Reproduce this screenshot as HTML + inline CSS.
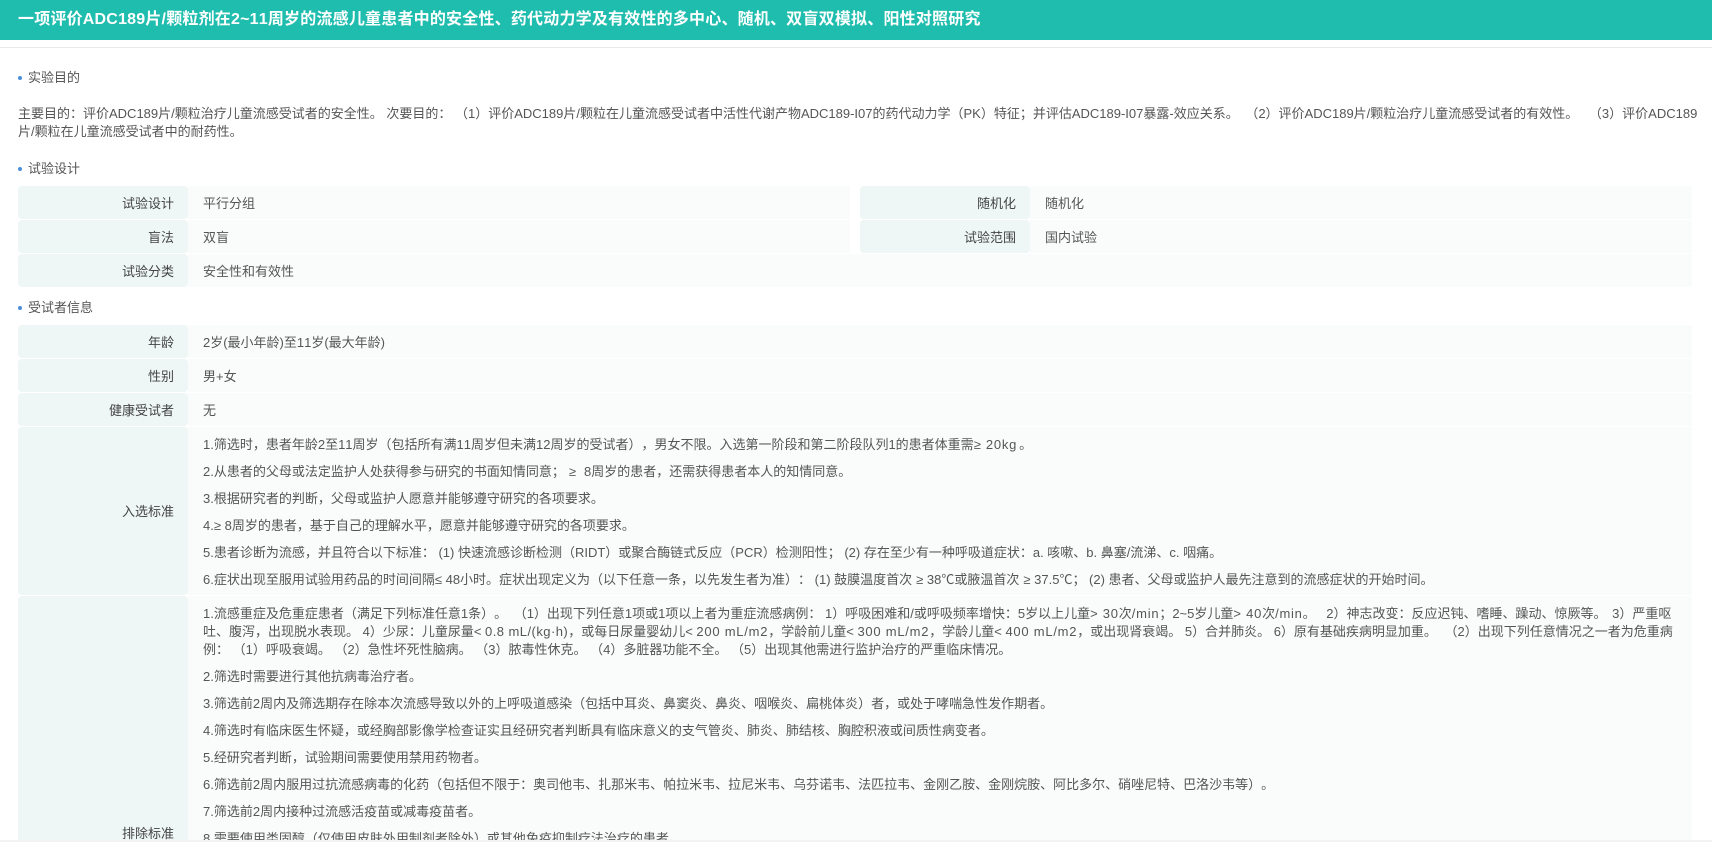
<!DOCTYPE html>
<html lang="zh-CN">
<head>
<meta charset="utf-8">
<title>试验详情</title>
<style>
*{box-sizing:border-box}
html,body{margin:0;padding:0;width:1712px;height:842px;overflow:hidden;background:#fff}
body{position:relative;font-family:"Liberation Sans","Noto Sans CJK SC",sans-serif;font-size:13px;line-height:18px;color:#555;text-spacing-trim:space-all;font-kerning:none}
.hdr{position:absolute;left:0;top:0;width:1712px;height:40px;background:#1fbdae;color:#fff;font-weight:bold;font-size:16px;letter-spacing:.2px;line-height:40px;padding-left:18px;white-space:nowrap}
.hl{position:absolute;left:0;top:47px;width:1712px;height:1px;background:#e8e8e8}
.sec{position:absolute;left:28px;white-space:nowrap;height:18px}
.sec:before{content:"";position:absolute;left:-10px;top:7px;width:4px;height:4px;border-radius:50%;background:#4a90d9}
.p{position:absolute;left:18px;top:105px;white-space:nowrap}
.l,.v{position:absolute;white-space:nowrap}
.l{background:#eef6f6;border-radius:4px;text-align:right;padding-right:14px;width:170px;color:#444}
.v{background:#fafcfc;padding-left:15px}
.l.c,.v.c{height:33px;line-height:35px}
.v p{margin:0 0 9px;white-space:nowrap}
.m{letter-spacing:.75px}
.k{letter-spacing:.45px}
.bot{position:absolute;left:0;top:840px;width:1712px;height:2px;background:#f3f3f3}
</style>
</head>
<body>
<div class="hdr">一项评价ADC189片/颗粒剂在2~11周岁的流感儿童患者中的安全性、药代动力学及有效性的多中心、随机、双盲双模拟、阳性对照研究</div>
<div class="hl"></div>

<div class="sec" style="top:69px">实验目的</div>
<div class="p">主要目的：评价ADC189片/颗粒治疗儿童流感受试者的安全性。 次要目的： （1）评价ADC189片/颗粒在儿童流感受试者中活性代谢产物ADC189-I07的药代动力学（PK）特征；并评估ADC189-I07暴露-效应关系。 <span style="margin-left:3px">（2）</span>评价ADC189片/颗粒治疗儿童流感受试者的有效性。 <span style="margin-left:7px">（3）</span>评价ADC189<br>片/颗粒在儿童流感受试者中的耐药性。</div>

<div class="sec" style="top:160px">试验设计</div>
<div class="l c" style="left:18px;top:186px">试验设计</div>
<div class="v c" style="left:188px;top:186px;width:662px">平行分组</div>
<div class="l c" style="left:860px;top:186px">随机化</div>
<div class="v c" style="left:1030px;top:186px;width:662px">随机化</div>
<div class="l c" style="left:18px;top:220px">盲法</div>
<div class="v c" style="left:188px;top:220px;width:662px">双盲</div>
<div class="l c" style="left:860px;top:220px">试验范围</div>
<div class="v c" style="left:1030px;top:220px;width:662px">国内试验</div>
<div class="l c" style="left:18px;top:254px">试验分类</div>
<div class="v c" style="left:188px;top:254px;width:1504px">安全性和有效性</div>

<div class="sec" style="top:299px">受试者信息</div>
<div class="l c" style="left:18px;top:325px">年龄</div>
<div class="v c" style="left:188px;top:325px;width:1504px">2岁(最小年龄)至11岁(最大年龄)</div>
<div class="l c" style="left:18px;top:359px">性别</div>
<div class="v c" style="left:188px;top:359px;width:1504px">男+女</div>
<div class="l c" style="left:18px;top:393px">健康受试者</div>
<div class="v c" style="left:188px;top:393px;width:1504px">无</div>

<div class="l" style="left:18px;top:427px;height:168px;line-height:170px">入选标准</div>
<div class="v" style="left:188px;top:427px;width:1504px;height:168px;padding-top:9px">
<p>1.筛选时，患者年龄2至11周岁（包括所有满11周岁但未满12周岁的受试者），男女不限。入选第一阶段和第二阶段队列1的患者体重需<span class="m">≥ 20kg</span><span style="margin-left:2px">。</span></p>
<p>2.从患者的父母或法定监护人处获得参与研究的书面知情同意；<span style="margin-left:4px">≥</span><span style="margin-left:8px">8</span>周岁的患者，还需获得患者本人的知情同意。</p>
<p>3.根据研究者的判断，父母或监护人愿意并能够遵守研究的各项要求。</p>
<p>4.≥ 8周岁的患者，基于自己的理解水平，愿意并能够遵守研究的各项要求。</p>
<p>5.患者诊断为流感，并且符合以下标准：&nbsp;(1)&nbsp;快速流感诊断检测（RIDT）或聚合酶链式反应（PCR）检测阳性；&nbsp;(2)&nbsp;存在至少有一种呼吸道症状：a. 咳嗽、b. 鼻塞/流涕、c. 咽痛。</p>
<p>6.症状出现至服用试验用药品的时间间隔≤ 48小时。症状出现定义为（以下任意一条，以先发生者为准）：&nbsp;(1)&nbsp;鼓膜温度首次<span style="margin-left:4px">≥</span> 38℃或腋温首次<span style="margin-left:4px">≥</span> 37.5℃；&nbsp;(2)&nbsp;患者、父母或监护人最先注意到的流感症状的开始时间。</p>
</div>

<div class="l" style="left:18px;top:596px;height:244px;border-radius:4px 4px 0 0"><span style="position:absolute;right:14px;top:229px">排除标准</span></div>
<div class="v" style="left:188px;top:596px;width:1504px;height:244px;padding-top:9px;overflow:hidden">
<p>1.流感重症及危重症患者（满足下列标准任意1条）。 <span style="margin-left:3px">（1）</span>出现下列任意1项或1项以上者为重症流感病例： 1）呼吸困难和/或呼吸频率增快：5岁以上儿童<span class="m">&gt; 30</span>次<span class="m">/min</span>；2~5岁儿童<span class="m">&gt; 40</span>次<span class="m">/min</span>。 <span style="margin-left:7px">2）</span>神志改变：反应迟钝、嗜睡、躁动、惊厥等。 <span style="margin-left:2px">3）</span>严重呕<br>吐、腹泻，出现脱水表现。 4）少尿：儿童尿量&lt; <span class="k">0.8 mL/(kg·h)</span>，或每日尿量婴幼儿&lt; <span class="m">200 mL/m2</span>，学龄前儿童&lt; <span class="m">300 mL/m2</span>，学龄儿童&lt; <span class="m">400 mL/m2</span>，或出现肾衰竭。 5）合并肺炎。 6）原有基础疾病明显加重。 <span style="margin-left:4px">（2）</span>出现下列任意情况之一者为危重病<br>例： （1）呼吸衰竭。 （2）急性坏死性脑病。 （3）脓毒性休克。 （4）多脏器功能不全。 （5）出现其他需进行监护治疗的严重临床情况。</p>
<p>2.筛选时需要进行其他抗病毒治疗者。</p>
<p>3.筛选前2周内及筛选期存在除本次流感导致以外的上呼吸道感染（包括中耳炎、鼻窦炎、鼻炎、咽喉炎、扁桃体炎）者，或处于哮喘急性发作期者。</p>
<p>4.筛选时有临床医生怀疑，或经胸部影像学检查证实且经研究者判断具有临床意义的支气管炎、肺炎、肺结核、胸腔积液或间质性病变者。</p>
<p>5.经研究者判断，试验期间需要使用禁用药物者。</p>
<p>6.筛选前2周内服用过抗流感病毒的化药（包括但不限于：奥司他韦、扎那米韦、帕拉米韦、拉尼米韦、乌芬诺韦、法匹拉韦、金刚乙胺、金刚烷胺、阿比多尔、硝唑尼特、巴洛沙韦等）。</p>
<p>7.筛选前2周内接种过流感活疫苗或减毒疫苗者。</p>
<p>8.需要使用类固醇（仅使用皮肤外用制剂者除外）或其他免疫抑制疗法治疗的患者。</p>
</div>
<div class="bot"></div>
</body>
</html>
